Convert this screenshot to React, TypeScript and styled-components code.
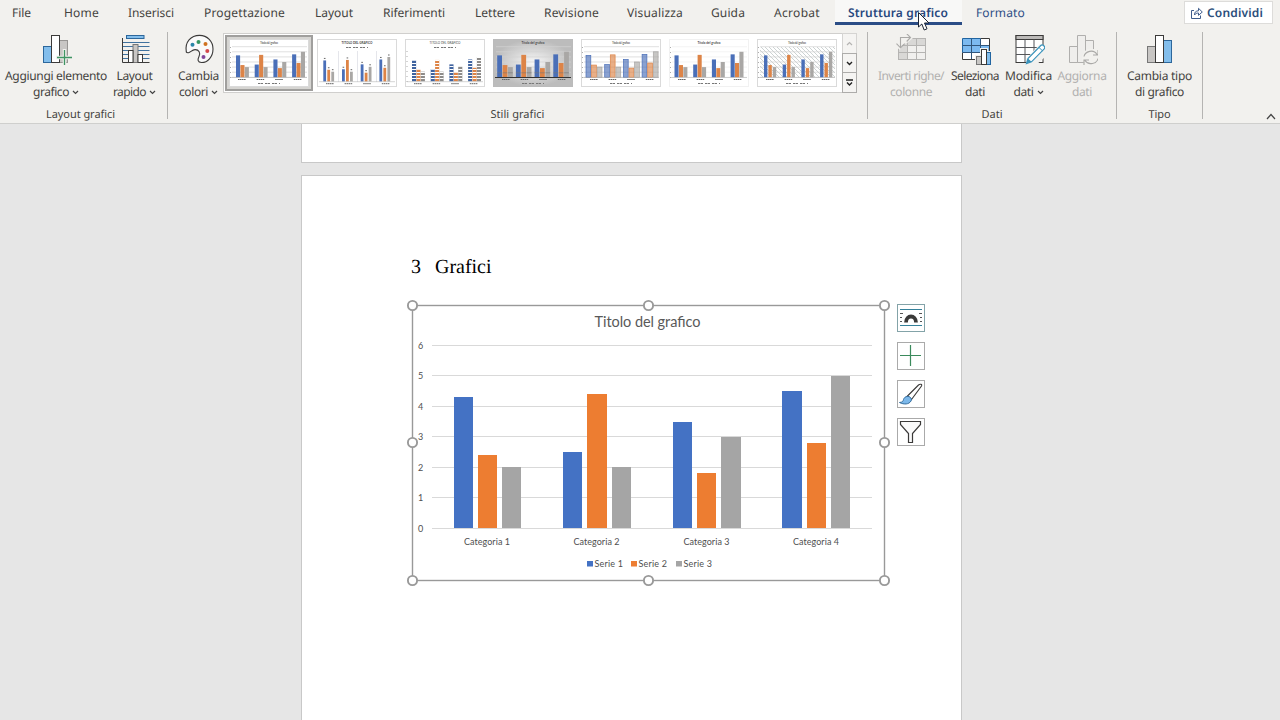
import React, { useLayoutEffect, useRef, useState } from 'react';
import styled, { createGlobalStyle, css } from 'styled-components';

const GlobalStyle = createGlobalStyle`
  * { box-sizing: border-box; }
  body { margin: 0; overflow: hidden; background: #e6e6e6; }
`;

const Screen = styled.div`
  position: relative;
  width: 1280px;
  height: 720px;
  overflow: hidden;
  display: flex;
  flex-direction: column;
  font-family: 'Noto Sans', 'Open Sans', sans-serif;
  font-size: 12px;
  color: #444340;
  background: #e6e6e6;
`;

/* ---------- text fitted to a given width ---------- */

const FitBox = styled.span<{ $w: number }>`
  display: inline-block;
  width: ${(p) => p.$w}px;
  white-space: nowrap;
  text-rendering: geometricPrecision;
`;

function Fit({ w, children }: { w: number; children: string }) {
  const ref = useRef<HTMLSpanElement>(null);
  const [spacing, setSpacing] = useState(0);
  useLayoutEffect(() => {
    if (ref.current) {
      const natural = ref.current.getBoundingClientRect().width;
      setSpacing((w - natural) / children.length);
    }
  }, [w, children]);
  return (
    <FitBox $w={w}>
      <span ref={ref} style={{ letterSpacing: spacing }}>{children}</span>
    </FitBox>
  );
}

/* ---------- tab bar ---------- */

const Ribbon = styled.header`
  height: 124px;
  background: #f2f1ee;
  border-bottom: 1px solid #cfcfcd;
  display: flex;
  flex-direction: column;
`;

const TabBar = styled.nav`
  height: 26px;
  display: flex;
  align-items: flex-start;
`;

const Tab = styled.div<{ $gap: number; $tone?: 'active' | 'link' }>`
  height: 25px;
  line-height: 25px;
  margin-left: ${(p) => p.$gap}px;
  ${(p) => p.$tone === 'link' && css`color: #2f4f86;`}
  ${(p) => p.$tone === 'active' && css`
    color: #28487e;
    font-weight: 600;
    padding: 0 14px 0 13px;
    background: #f8f8f7;
    border-bottom: 3px solid #2b4d86;
  `}
`;

const ShareButton = styled.button`
  margin: 1px 7px 0 auto;
  width: 89px;
  height: 23px;
  padding: 0 0 0 6px;
  display: flex;
  align-items: center;
  gap: 4px;
  border: 1px solid #dddcda;
  background: #fff;
  color: #2c4f7c;
  font: 600 12px 'Noto Sans', sans-serif;
`;

const tabs: [string, number, number][] = [
  ['File', 12, 19], ['Home', 33, 35], ['Inserisci', 29, 46], ['Progettazione', 30, 81],
  ['Layout', 30, 38], ['Riferimenti', 30, 62], ['Lettere', 30, 40], ['Revisione', 29, 55],
  ['Visualizza', 28, 56], ['Guida', 28, 34], ['Acrobat', 29, 46],
];

/* ---------- ribbon groups ---------- */

const Groups = styled.div`
  flex: 1;
  display: flex;
  padding-top: 6px;
`;

const Group = styled.section<{ $w: number }>`
  width: ${(p) => p.$w}px;
  height: 87px;
  border-right: 1px solid #b5b4b2;
  display: flex;
  flex-direction: column;
`;

const GroupBody = styled.div`
  flex: none;
  height: 74px;
  display: flex;
`;

const GroupLabel = styled.div<{ $shift?: number }>`
  flex: none;
  height: 13px;
  text-align: center;
  font-size: 11px;
  line-height: 17px;
  margin-top: 0;
  padding-top: 0;
  display: flex;
  justify-content: center;
  align-items: flex-end;
  margin-left: ${(p) => p.$shift ?? 0}px;

  ${FitBox} { margin-bottom: -4px; }
`;

const Tool = styled.div<{ $w: number; $gap?: number; $off?: boolean }>`
  width: ${(p) => p.$w}px;
  margin-left: ${(p) => p.$gap ?? 0}px;
  padding-top: 2px;
  display: flex;
  flex-direction: column;
  align-items: center;
  color: ${(p) => (p.$off ? '#b1b0ae' : '#444340')};
`;

const ToolIcon = styled.svg`
  width: 32px;
  height: 32px;
  margin-bottom: 2px;
`;

const ToolLine = styled.div`
  height: 16px;
  line-height: 16px;
  display: flex;
  align-items: center;
  gap: 3px;
`;

const Chevron = () => (
  <svg width="7" height="5" viewBox="0 0 7 5"><path d="M1 1l2.5 2.5L6 1" fill="none" stroke="#444" strokeWidth="1.2" /></svg>
);

type ToolProps = {
  w: number; gap?: number; off?: boolean; menu?: boolean;
  first: [string, number]; second: [string, number]; children: React.ReactNode;
};

function ToolButton({ w, gap, off, menu, first, second, children }: ToolProps) {
  return (
    <Tool $w={w} $gap={gap} $off={off}>
      <ToolIcon viewBox="0 0 32 32">{children}</ToolIcon>
      <ToolLine><Fit w={first[1]}>{first[0]}</Fit></ToolLine>
      <ToolLine><Fit w={second[1]}>{second[0]}</Fit>{menu && <Chevron />}</ToolLine>
    </Tool>
  );
}

/* ---------- style gallery ---------- */

const Gallery = styled.div`
  margin: 1px 0 0 1px;
  width: 634px;
  height: 60px;
  padding-left: 1px;
  display: flex;
  background: #fff;
  border: 1px solid #d0cfcd;
`;

const Style = styled.div<{ $on?: boolean }>`
  flex: none;
  width: 88px;
  height: 56px;
  margin-top: 1px;
  padding: ${(p) => (p.$on ? '2px' : '4px')};
  border: ${(p) => (p.$on ? '2px solid #a09f9d' : '0')};
  background: ${(p) => (p.$on ? '#d6d5d2' : '#fff')};
  svg { display: block; }
`;

const GalleryScroll = styled.div`
  width: 15px;
  height: 60px;
  margin: -1px -1px 0 auto;
  display: flex;
  flex-direction: column;
`;

const ScrollButton = styled.div<{ $off?: boolean }>`
  flex: 1;
  display: flex;
  align-items: center;
  justify-content: center;
  background: #f5f4f2;
  border: 1px solid ${(p) => (p.$off ? '#d5d4d2' : '#adacaa')};
  & + & { margin-top: -1px; }
`;

const data = [[4.3, 2.4, 2], [2.5, 4.4, 2], [3.5, 1.8, 3], [4.5, 2.8, 5]];
const palette = ['#4472c4', '#ed7d31', '#a5a5a5'];
const thumbPalette = ['#4a6fb8', '#dd8447', '#a9a7a5'];

function Thumb({ kind }: { kind: number }) {
  const striped = kind === 2;
  const low = kind === 1 || striped;
  const base = low ? 42.5 : 38.3;
  const unit = low ? 4.9 : 5.1;
  const barW = kind === 1 ? 2.8 : kind === 4 ? 4.8 : kind === 6 ? 3.4 : 4.1;
  const step = kind === 4 ? 5.6 : kind === 1 ? 4 : 4.4;
  const startX = kind === 4 ? 5 : kind === 1 ? 6.3 : kind === 3 ? 4.2 : kind === 5 ? 5.5 : 7;
  const dark = kind === 3;
  const wide = dark ? 5.4 : step;
  return (
    <svg width="80" height="48" viewBox="0 0 80 48">
      <defs>
        <radialGradient id="shade"><stop offset="0" stopColor="#f8f8f8" /><stop offset="1" stopColor="#bcbcbc" /></radialGradient>
        <pattern id="hatch" width="4" height="4" patternUnits="userSpaceOnUse">
          <path d="M0 0L4 4" stroke="#a9b6b6" strokeWidth=".6" />
        </pattern>
        <pattern id="rows" width="4" height="3" patternUnits="userSpaceOnUse">
          <rect width="4" height="1" fill="#fff" />
        </pattern>
      </defs>
      <rect x=".5" y=".5" width="79" height="47" fill={dark ? 'url(#shade)' : '#fff'} stroke={dark ? '#bbb' : kind === 5 ? '#f1f1f1' : '#dadada'} />
      {kind === 6 && <rect x="3" y="8" width="75" height="30" fill="url(#hatch)" />}
      {!low && [0, 1, 2, 3, 4, 5, 6].map((i) => (
        <path key={i} d={`M3 ${base - i * unit}H78`} stroke={kind === 5 ? '#efefef' : '#d3d3d3'} strokeWidth=".7" />
      ))}
      {kind === 1 && <path d="M21.5 12V43M40.5 12V43M59.5 12V43" stroke="#dedfe6" strokeWidth=".8" />}
      {data.map((row, c) => row.map((v, s) => {
        const x = startX + c * 18.7 + s * wide;
        return (
          <g key={`${c}-${s}`}>
            <rect x={x} y={base - v * unit} width={dark ? 4.8 : barW} height={v * unit}
              fill={striped ? ['#3f639f', '#dd8447', '#8d8b89'][s] : thumbPalette[s]} fillOpacity={kind === 4 ? 0.65 : 1}
              stroke={kind === 4 ? thumbPalette[s] : 'none'} strokeWidth=".7" />
            {striped && <rect x={x} y={base - v * unit} width={barW} height={v * unit} fill="url(#rows)" />}
            {kind === 1 && <path d={`M${x + 0.6} ${base - v * unit - 2}h1.6`} stroke="#666" strokeWidth="1" />}
            {dark && <path d={`M${x} ${base - 4.5}h4.8`} stroke="#777" strokeWidth=".6" />}
          </g>
        );
      }))}
      {!low && !dark && <path d="M1.500 8V39" stroke="#888" strokeWidth=".7" strokeDasharray="1 4" />}
      {striped && <path d="M2 12V43" stroke="#888" strokeWidth=".7" strokeDasharray="1 4" />}
      <path d={`M2 ${base + 0.2}H78`} stroke={dark ? '#333' : '#aaa'} strokeWidth={dark ? 1 : 0.5} />
      <text x="40" y="4.6" textAnchor="middle" fontFamily="Lato" fontSize="3" fontWeight={kind === 1 || dark || kind === 5 ? 700 : 400} fill="#444"
        textLength={low ? 31 : dark || kind === 5 ? 23 : 18}>{low ? 'TITOLO DEL GRAFICO' : 'Titolo del grafico'}</text>
      <path d={`M9 ${base + 2.2}h8M27.600 ${base + 2.2}h8M46.200 ${base + 2.2}h8M64.800 ${base + 2.2}h8`} stroke="#666" strokeWidth="1" strokeDasharray="1.600 .4" />
      <path d={low ? 'M29 8.500H51' : 'M29 44.500H51'} stroke="#777" strokeWidth="1" strokeDasharray="2 .5 2.500 2" />
    </svg>
  );
}

/* ---------- document ---------- */

const Workspace = styled.main`
  flex: 1;
  display: flex;
  flex-direction: column;
  padding-left: 301px;
  gap: 12px;
`;

const Page = styled.article<{ $tail?: boolean }>`
  width: 661px;
  background: #fff;
  border: 1px solid #c8c8c8;
  ${(p) => (p.$tail ? css`height: 39px; border-top: 0;` : css`flex: 1; border-bottom: 0; padding: 80px 0 0 102px;`)}
`;

const Heading = styled.h1`
  margin: 0 0 0 7px;
  height: 22px;
  display: flex;
  gap: 14px;
  font: 400 20px/22px 'Liberation Serif', serif;
  color: #000;
`;

const ChartRow = styled.div`
  margin-top: 20px;
  display: flex;
  gap: 5px;
  svg { display: block; }
`;

const SideTools = styled.div`
  padding-top: 6px;
  display: flex;
  flex-direction: column;
  gap: 10px;
`;

const SideTool = styled.div<{ $first?: boolean }>`
  width: 28px;
  height: 28px;
  border: 1px solid ${(p) => (p.$first ? '#83a3a8' : '#aaa')};
  background: #fff;
`;

const barX = [[454, 478, 502], [563, 587, 612], [673, 697, 721], [782, 807, 831]];
const barW = [[19, 19, 19], [19, 20, 19], [19, 19, 20], [20, 19, 19]];

function Chart() {
  const y = (v: number) => Math.round(528.3 - v * 30.5);
  return (
    <svg width="488" height="290" viewBox="404 298 488 290" fontFamily="Lato, sans-serif" fill="#4f4f4f">
      <rect x="412.500" y="305.500" width="472" height="275" fill="#fff" stroke="#999" strokeWidth="1.400" />
      <text x="594.500" y="327" fontSize="14.500" fill="#595959" textLength="106">Titolo del grafico</text>
      {[0, 1, 2, 3, 4, 5, 6].map((v) => {
        const gy = [528, 497, 467, 436, 406, 375, 345][v] + 0.5;
        return (
          <g key={v}>
            <path d={`M432 ${gy}H872`} stroke="#d9d9d9" />
            <text x="418" y={gy + 3.500} fontSize="9">{v}</text>
          </g>
        );
      })}
      {data.map((row, c) => row.map((v, s) => (
        <rect key={`${c}-${s}`} x={barX[c][s]} y={y(v)} width={barW[c][s]} height={528 - y(v)} fill={palette[s]} />
      )))}
      {[464, 573.5, 683.5, 793].map((x, i) => (
        <text key={x} x={x} y="545" fontSize="9" textLength="46">{`Categoria ${i + 1}`}</text>
      ))}
      {[587, 631, 676].map((x, i) => (
        <g key={x}>
          <rect x={x} y="561" width="6" height="5.500" fill={palette[i]} />
          <text x={x + 7.5} y="567" fontSize="9" textLength="28.500">{`Serie ${i + 1}`}</text>
        </g>
      ))}
      {[[412.5, 305.5], [648.5, 305.5], [884.5, 305.5], [412.5, 442.5], [884.5, 442.5], [412.5, 580.5], [648.5, 580.5], [884.5, 580.5]].map(([cx, cy]) => (
        <circle key={`${cx}-${cy}`} cx={cx} cy={cy} r="4.600" fill="#fff" stroke="#999" strokeWidth="1.900" />
      ))}
    </svg>
  );
}

const Pointer = styled.svg`
  position: absolute;
  left: 917px;
  top: 11px;
`;

const Collapse = styled.svg`
  margin: 81px 4px 0 auto;
`;

export default function App() {
  return (
    <Screen>
      <GlobalStyle />
      <Ribbon>
        <TabBar>
          {tabs.map(([label, gap, w]) => <Tab key={label} $gap={gap}><Fit w={w}>{label}</Fit></Tab>)}
          <Tab $gap={15} $tone="active"><Fit w={100}>Struttura grafico</Fit></Tab>
          <Tab $gap={14} $tone="link"><Fit w={49}>Formato</Fit></Tab>
          <ShareButton>
            <svg width="12" height="12" viewBox="0 0 12 12" fill="none" stroke="#3f5c8c">
              <path d="M3 3.500H.5V11.500H9.500V8.500" />
              <path d="M3.500 8C3.500 5 5 3.800 7.500 3.800V1.300L11.300 5L7.500 8.300V6C5.500 6 4.500 6.500 3.500 8Z" />
            </svg>
            <Fit w={56}>Condividi</Fit>
          </ShareButton>
        </TabBar>
        <Groups>
          <Group $w={168}>
            <GroupBody>
              <ToolButton w={112} menu first={['Aggiungi elemento', 102]} second={['grafico', 36]}>
                <rect x="3.500" y="12.500" width="8" height="16" fill="#83beec" stroke="#2d679b" />
                <rect x="19.500" y="6.500" width="8" height="22" fill="#c8c6c4" stroke="#979593" />
                <rect x="11.500" y="1.500" width="8" height="27" fill="#fff" stroke="#3b3a39" />
                <path d="M16 23.500H32M24.500 15V32" stroke="#f2f1ee" strokeWidth="3.500" />
                <path d="M17 23.500H32M24.500 16V31" stroke="#3f9463" strokeWidth="1.300" />
              </ToolButton>
              <ToolButton w={45} menu first={['Layout', 36]} second={['rapido', 33]}>
                <path d="M3 8.500H30.500M3 12.500H30.500M3 16.500H30.500M3 20.500H30.500M3 24.500H30.500" stroke="#40729f" />
                <rect x="7.500" y="1.500" width="17.500" height="3" fill="#83beec" stroke="#2d679b" />
                <path d="M3.500 4V28.500H30.500" fill="none" stroke="#3b3a39" />
                <rect x="14" y="10.500" width="5" height="18" fill="#c8c6c4" stroke="#777" />
                <rect x="19" y="20.500" width="4.500" height="8" fill="#fff" stroke="#3b3a39" />
                <rect x="9.500" y="16.500" width="4.500" height="12" fill="#fff" stroke="#3b3a39" />
              </ToolButton>
            </GroupBody>
            <GroupLabel $shift={-6}><Fit w={69}>Layout grafici</Fit></GroupLabel>
          </Group>
          <Group $w={700}>
            <GroupBody>
              <ToolButton w={47} gap={7} menu first={['Cambia', 41]} second={['colori', 29]}>
                <path d="M3.300 18C1.500 8 8 1.400 16.500 1.400C24.500 1.400 30 7.500 30 15C30 23 24.500 28.600 18.500 28.500C14.500 28.300 14.500 25.500 16 22.500C17.800 19 16 15.500 12 15.600C9 15.700 7.500 18.500 5.500 18.700C4.200 18.800 3.500 18.600 3.300 18Z" fill="#fafafa" stroke="#3b3a39" strokeWidth="1.100" />
                <circle cx="9.500" cy="10.800" r="2" fill="#2a86a8" />
                <circle cx="15.500" cy="8" r="2" fill="#369663" />
                <circle cx="22.500" cy="10" r="2" fill="#cf7220" />
                <circle cx="24.300" cy="17" r="2" fill="#d5494d" />
                <circle cx="20.500" cy="23" r="2" fill="#83479b" />
              </ToolButton>
              <Gallery>
                {[0, 1, 2, 3, 4, 5, 6].map((k) => <Style key={k} $on={k === 0}><Thumb kind={k} /></Style>)}
                <GalleryScroll>
                  <ScrollButton $off><svg width="7" height="5"><path d="M1 4l2.500-2.500L6 4" fill="none" stroke="#b5b4b2" strokeWidth="1.200" /></svg></ScrollButton>
                  <ScrollButton><svg width="7" height="5"><path d="M1 1l2.500 2.500L6 1" fill="none" stroke="#222" strokeWidth="1.400" /></svg></ScrollButton>
                  <ScrollButton><svg width="7" height="8"><path d="M0 1H7M1 3.500l2.500 2.500L6 3.500" fill="none" stroke="#222" strokeWidth="1.400" /></svg></ScrollButton>
                </GalleryScroll>
              </Gallery>
            </GroupBody>
            <GroupLabel><Fit w={54}>Stili grafici</Fit></GroupLabel>
          </Group>
          <Group $w={249}>
            <GroupBody>
              <ToolButton w={68} gap={9} off first={['Inverti righe/', 66]} second={['colonne', 42]}>
                <rect x="3.500" y="4.500" width="27" height="21" fill="#d9d8d6" stroke="#b5b4b2" />
                <path d="M12.500 11.500H30.500V25.500H12.500Z" fill="#f1f0ee" />
                <path d="M12.500 4.500V25.500M21.500 4.500V25.500M3.500 11.500H30.500M3.500 18.500H30.500M30.500 4.500V25.500H3.500" fill="none" stroke="#b5b4b2" />
                <path d="M1 1H13L18 4L12 9L7 11L5 16L0 12Z" fill="#f2f1ee" />
                <path d="M5.500 13.500V3.500H15M1.500 9.700L5.500 13.800L9.700 9.700M11.700 -.3L15.500 3.500L11.700 7.500" fill="none" stroke="#aaa9a7" strokeWidth="1.100" />
              </ToolButton>
              <ToolButton w={52} gap={4} first={['Seleziona', 48]} second={['dati', 20]}>
                <rect x="3.500" y="4.500" width="27" height="21" fill="#fff" />
                <path d="M3.500 4.500H21.500V18.500H3.500Z" fill="#7cbaf0" />
                <path d="M21.500 11.500H30.500V18.500H21.500Z" fill="#7cbaf0" />
                <path d="M12.500 4.500V25.500M21.500 4.500V25.500M3.500 11.500H30.500M3.500 18.500H30.500" stroke="#31567b" />
                <path d="M3.500 18.500V25.500H30.500V4.500H21.500" fill="none" stroke="#3b3a39" />
                <path d="M3.500 18.500V4.500H21.500" fill="none" stroke="#2265a0" />
                <path d="M16 32V21H21V14H29V17H32V32Z" fill="#f2f1ee" />
                <rect x="17.500" y="22.500" width="5" height="8" fill="#c8c6c4" stroke="#777" />
                <rect x="27.500" y="18.500" width="4" height="12" fill="#83beec" stroke="#2265a0" />
                <rect x="22.500" y="15.500" width="5" height="15" fill="#fff" stroke="#3b3a39" />
              </ToolButton>
              <ToolButton w={51} gap={2} menu first={['Modifica', 47]} second={['dati', 20]}>
                <rect x="3" y="1.500" width="27" height="27" fill="#fff" stroke="#3b3a39" />
                <rect x="3" y="1.500" width="27" height="4" fill="#bcbab8" stroke="#3b3a39" />
                <path d="M12 5.500V28.500M21 5.500V28.500M3 13.500H30M3 20.500H30" stroke="#55575a" />
                <path d="M13 32V25L27 10L33 12V22L22 32Z" fill="#f2f1ee" />
                <path d="M13.500 29.500L15 24.500L27.800 11.500C29.500 9.800 33 12.800 31.200 14.900L18.500 27.800Z" fill="#fff" stroke="#3a93bb" strokeWidth="1.200" />
                <path d="M15 24.500L18.500 27.800L13.500 29.500Z" fill="#3a93bb" />
                <path d="M26 13.500L29.500 16.800" stroke="#3a93bb" />
              </ToolButton>
              <ToolButton w={52} gap={2} off first={['Aggiorna', 49]} second={['dati', 20]}>
                <path d="M3.500 12.500H11.500V28.500H3.500ZM19.500 6.500H27.500V28.500H19.500ZM11.500 1.500H19.500V28.500H11.500Z" fill="#efeeec" stroke="#b0afad" />
                <circle cx="25" cy="23.500" r="9" fill="#f2f1ee" />
                <path d="M18 22.500C19 17.500 27.500 14.500 31 20.500M32 16V21H27M32 24.500C31 29.500 22.500 32 19 26.500M18 31V26H23" fill="none" stroke="#aaa9a7" strokeWidth="1.100" />
              </ToolButton>
            </GroupBody>
            <GroupLabel><Fit w={21}>Dati</Fit></GroupLabel>
          </Group>
          <Group $w={86}>
            <GroupBody>
              <ToolButton w={86} first={['Cambia tipo', 65]} second={['di grafico', 49]}>
                <rect x="3.500" y="12.500" width="8" height="16" fill="#c8c6c4" stroke="#777" />
                <rect x="19.500" y="6.500" width="8" height="22" fill="#83beec" stroke="#2d679b" />
                <rect x="11.500" y="1.500" width="8" height="27" fill="#fff" stroke="#3b3a39" />
              </ToolButton>
            </GroupBody>
            <GroupLabel><Fit w={22}>Tipo</Fit></GroupLabel>
          </Group>
          <Collapse width="10" height="7"><path d="M1 6L5 1.500L9 6" fill="none" stroke="#444" strokeWidth="1.200" /></Collapse>
        </Groups>
      </Ribbon>
      <Workspace>
        <Page $tail />
        <Page>
          <Heading><Fit w={10}>3</Fit><Fit w={56.5}>Grafici</Fit></Heading>
          <ChartRow>
            <Chart />
            <SideTools>
              <SideTool $first>
                <svg width="26" height="26" viewBox="0 0 26 26" fill="none">
                  <path d="M2 4.500H24M2 20.500H24" stroke="#35819a" />
                  <path d="M2 8.500H5M2 12.500H4M2 16.500H4M21 8.500H24M22 12.500H24M22 16.500H24" stroke="#555" />
                  <path d="M8 17.500C8 9.500 18 9.500 18 17.500" stroke="#3b3a39" strokeWidth="3.800" />
                </svg>
              </SideTool>
              <SideTool><svg width="26" height="26"><path d="M12.500 2V23M2 12.500H23" stroke="#3b8a5c" strokeWidth="1.200" /></svg></SideTool>
              <SideTool>
                <svg width="26" height="26" viewBox="0 0 26 26">
                  <path d="M9.500 15L20.500 4C22 2.700 24.500 3 23.500 5L13.500 18.500Z" fill="#fff" stroke="#3b3a39" strokeWidth="1.100" />
                  <path d="M9 15.500C11.500 14.800 14.500 17.500 13 20C11 23.500 6 23.800 1.500 21.500C4.500 21.200 5 20.500 5.500 18.500C6 16.800 7.500 15.500 9 15.500Z" fill="#7cb8ea" stroke="#356e9e" />
                </svg>
              </SideTool>
              <SideTool>
                <svg width="26" height="26"><path d="M2.500 2.500H22.500V5.500L14.500 14.500V23.500H10.500V14.500L2.500 5.500Z" fill="#fafafa" stroke="#3b3a39" strokeWidth="1.200" /></svg>
              </SideTool>
            </SideTools>
          </ChartRow>
        </Page>
      </Workspace>
      <Pointer width="14" height="22" viewBox="0 0 14 22">
        <path d="M1.500 1.500V16L4.800 13L7.200 19L10 17.800L7.500 12H12Z" fill="#fff" stroke="#1c2433" />
      </Pointer>
    </Screen>
  );
}
